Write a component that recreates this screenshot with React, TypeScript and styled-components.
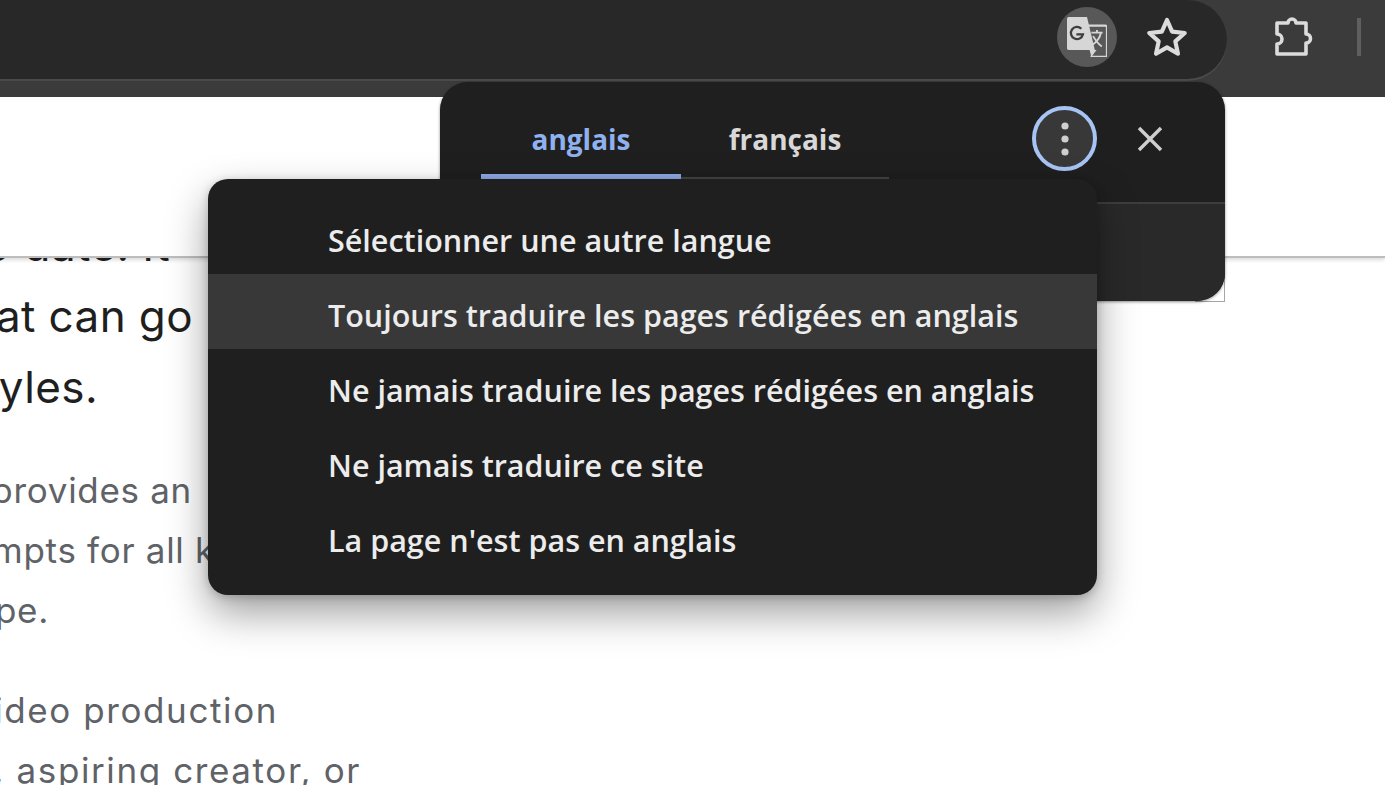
import React from "react";
import styled, { createGlobalStyle } from "styled-components";

const GlobalStyle = createGlobalStyle`
    html, body {
        margin: 0;
        padding: 0;
        background: #fff;
    }
`;

const MENU_ITEMS = [
    "Sélectionner une autre langue",
    "Toujours traduire les pages rédigées en anglais",
    "Ne jamais traduire les pages rédigées en anglais",
    "Ne jamais traduire ce site",
    "La page n'est pas en anglais",
];

const HEADING_LINES = [
    { text: "up to date. It", end: 170 },
    { text: "that can go", end: 193 },
    { text: "styles.", end: 98 },
];

const BODY_PARAGRAPHS = [
    {
        tracking: 0.7,
        lines: [
            { text: "Gemini provides an", end: 192 },
            { text: "prompts for all k", end: 215 },
            { text: "type.", end: 49 },
        ],
    },
    {
        tracking: 1.6,
        lines: [
            { text: "video production", end: 278 },
            { text: "r, aspiring creator, or", end: 361 },
        ],
    },
];

const TranslateIcon = () => (
    <svg width="40" height="40" viewBox="0 0 46 46" fill="none">
        <path d="M22 10h22a2 2 0 0 1 2 2v32a2 2 0 0 1-2 2H27" stroke="#d6d6d6" strokeWidth="2.6" />
        <path d="M0 2a2 2 0 0 1 2-2h21l9 38H2a2 2 0 0 1-2-2z" fill="#d6d6d6" />
        <path d="M26 38h8l-6 8z" fill="#d6d6d6" />
        <path d="M16.5 13.5a7 7 0 1 0 1.8 6.5h-7.5" stroke="#3d3d3d" strokeWidth="2.6" />
        <path d="M28 18h13M34.5 15v3M39 18c-1 6-5 11-11 15M30 22c3 5 6 9 10 12" stroke="#d6d6d6" strokeWidth="2.2" />
    </svg>
);

const StarIcon = () => (
    <svg width="46" height="46" viewBox="0 0 42 42" fill="none">
        <path d="M21 5.5l4.7 10.6 11.5 1.2-8.6 7.7 2.4 11.3L21 30.5l-10 5.8 2.4-11.3-8.6-7.7 11.5-1.2z" stroke="#dcdcdc" strokeWidth="3.8" strokeLinejoin="round" />
    </svg>
);

const PuzzleIcon = () => (
    <svg width="44" height="44" viewBox="0 0 44 44" fill="none">
        <path d="M6 8h11a4 4 0 0 1 8 0h10v11a4.4 4.4 0 0 1 0 9v11H6V29a5 5 0 0 0 0-10z" stroke="#dcdcdc" strokeWidth="3.6" strokeLinejoin="round" />
    </svg>
);

const MoreIcon = () => (
    <svg width="8" height="34" viewBox="0 0 8 34" fill="#cfcfcf">
        <circle cx="4" cy="4" r="3.6" />
        <circle cx="4" cy="17" r="3.6" />
        <circle cx="4" cy="30" r="3.6" />
    </svg>
);

const CloseIcon = () => (
    <svg width="26" height="26" viewBox="0 0 26 26" fill="none">
        <path d="M2 2l22 22M24 2L2 24" stroke="#cfcfcf" strokeWidth="3.4" />
    </svg>
);

export default function App() {
    return (
        <Window>
            <GlobalStyle />
            <Toolbar>
                <Omnibox>
                    <TranslateBadge><TranslateIcon /></TranslateBadge>
                    <StarSlot><StarIcon /></StarSlot>
                </Omnibox>
                <ToolbarEnd>
                    <PuzzleIcon />
                    <ToolbarDivider />
                </ToolbarEnd>
            </Toolbar>
            <PageHeader />
            <PageBody>
                <HeadingBlock>
                    {HEADING_LINES.map(line => (
                        <ClippedLine key={line.text} $end={line.end}>{line.text}</ClippedLine>
                    ))}
                </HeadingBlock>
                {BODY_PARAGRAPHS.map((paragraph, i) => (
                    <Paragraph key={i} $tracking={paragraph.tracking}>
                        {paragraph.lines.map(line => (
                            <ClippedLine key={line.text} $end={line.end}>{line.text}</ClippedLine>
                        ))}
                    </Paragraph>
                ))}
            </PageBody>

            <BubbleFrame>
                <Bubble>
                    <BubbleTop>
                        <Tabs>
                            <Tab $active>anglais</Tab>
                            <Tab>français</Tab>
                        </Tabs>
                        <MoreButton><MoreIcon /></MoreButton>
                        <CloseButton><CloseIcon /></CloseButton>
                    </BubbleTop>
                    <BubbleBottom />
                </Bubble>
            </BubbleFrame>

            <Menu>
                {MENU_ITEMS.map((item, i) => (
                    <MenuItem key={item} $hover={i === 1}>{item}</MenuItem>
                ))}
            </Menu>
        </Window>
    );
}

const Window = styled.div`
    position: relative;
    display: flex;
    flex-direction: column;
    width: 1385px;
    height: 785px;
    overflow: hidden;
    background: #fff;
`;

const Toolbar = styled.div`
    display: flex;
    flex: none;
    height: 97px;
    background: #3b3b3b;
`;

const Omnibox = styled.div`
    display: flex;
    flex: none;
    align-items: center;
    justify-content: flex-end;
    width: 1227px;
    height: 79px;
    padding: 0 37px 6px 0;
    box-sizing: border-box;
    background: #282828;
    border-radius: 0 40px 40px 0;
    box-shadow: 0 2px 0 #4a4a4a;
`;

const TranslateBadge = styled.div`
    display: flex;
    align-items: center;
    justify-content: center;
    width: 60px;
    height: 60px;
    margin-right: 27px;
    border-radius: 50%;
    background: #585858;
`;

const StarSlot = styled.div`
    display: flex;
`;

const ToolbarEnd = styled.div`
    display: flex;
    align-items: center;
    height: 74px;
    padding-left: 44px;
    gap: 42px;
`;

const ToolbarDivider = styled.div`
    width: 4px;
    height: 38px;
    background: #5f5f5f;
`;

const PageHeader = styled.div`
    flex: none;
    height: 161px;
    background: #fff;
    border-bottom: 2px solid #bdbdbd;
    box-sizing: border-box;
    box-shadow: 0 2px 4px rgba(0, 0, 0, 0.15);
    position: relative;
    z-index: 1;
`;

const PageBody = styled.div`
    flex: 1;
    overflow: hidden;
    font-family: Inter, sans-serif;
`;

const HeadingBlock = styled.div`
    margin-top: -48px;
    color: #1f1f1f;
    font-size: 44px;
    line-height: 71px;
    letter-spacing: 0.4px;
`;

const Paragraph = styled.div<{ $tracking: number }>`
    margin-top: 40px;
    color: #5f6368;
    font-size: 35px;
    line-height: 60px;
    letter-spacing: ${p => p.$tracking}px;

    ${HeadingBlock} + & {
        margin-top: 37px;
    }
`;

const ClippedLine = styled.div<{ $end: number }>`
    display: flex;
    justify-content: flex-end;
    width: ${p => p.$end}px;
    white-space: nowrap;
`;

const BubbleFrame = styled.div`
    position: absolute;
    top: 82px;
    left: 440px;
    z-index: 2;
    width: 785px;
    height: 220px;

    &::before {
        content: "";
        position: absolute;
        right: 0;
        bottom: 0;
        width: 30px;
        height: 30px;
        box-sizing: border-box;
        border-right: 1px solid #a6a6a6;
        border-bottom: 1px solid #a6a6a6;
    }
`;

const Bubble = styled.div`
    position: relative;
    display: flex;
    flex-direction: column;
    width: 785px;
    height: 219px;
    overflow: hidden;
    border-radius: 28px;
    background: #1f1f1f;
    box-shadow: 0 1px 3px rgba(0, 0, 0, 0.45);
`;

const BubbleTop = styled.div`
    display: flex;
    flex: none;
    height: 122px;
    align-items: flex-start;
    padding-left: 41px;
    box-sizing: border-box;
    border-bottom: 2px solid #3d3d3d;
`;

const Tabs = styled.div`
    display: flex;
    width: 408px;
    height: 97px;
    margin-right: 143px;
    box-sizing: border-box;
    border-bottom: 2px solid #454545;
`;

const Tab = styled.div<{ $active?: boolean }>`
    display: flex;
    flex: ${p => (p.$active ? "0 0 200px" : "1")};
    align-items: center;
    justify-content: center;
    height: 97px;
    box-sizing: border-box;
    padding-top: 22px;
    color: ${p => (p.$active ? "#8fb1ee" : "#d8d8d8")};
    font-family: "Open Sans", sans-serif;
    font-size: 28px;
    font-weight: 700;
    border-bottom: ${p => (p.$active ? "5px solid #8fabe8" : "5px solid transparent")};
`;

const MoreButton = styled.div`
    display: flex;
    align-items: center;
    justify-content: center;
    width: 65px;
    height: 65px;
    margin-top: 24px;
    box-sizing: border-box;
    border: 4px solid #a8c4f5;
    border-radius: 50%;
    background: #383838;
`;

const CloseButton = styled.div`
    display: flex;
    margin: 44px 0 0 40px;
`;

const BubbleBottom = styled.div`
    flex: 1;
    background: #292929;
`;

const Menu = styled.div`
    position: absolute;
    top: 179px;
    left: 208px;
    z-index: 3;
    width: 889px;
    height: 416px;
    padding-top: 20px;
    box-sizing: border-box;
    border-radius: 20px;
    background: #1f1f1f;
    box-shadow: 0 18px 40px rgba(0, 0, 0, 0.38), 0 2px 10px rgba(0, 0, 0, 0.2);
`;

const MenuItem = styled.div<{ $hover?: boolean }>`
    display: flex;
    align-items: center;
    height: 75px;
    padding: 6px 0 0 120px;
    box-sizing: border-box;
    color: #ececec;
    background: ${p => (p.$hover ? "#383838" : "transparent")};
    font-family: "Open Sans", sans-serif;
    font-size: 30.5px;
    font-weight: 600;
    white-space: nowrap;
`;
